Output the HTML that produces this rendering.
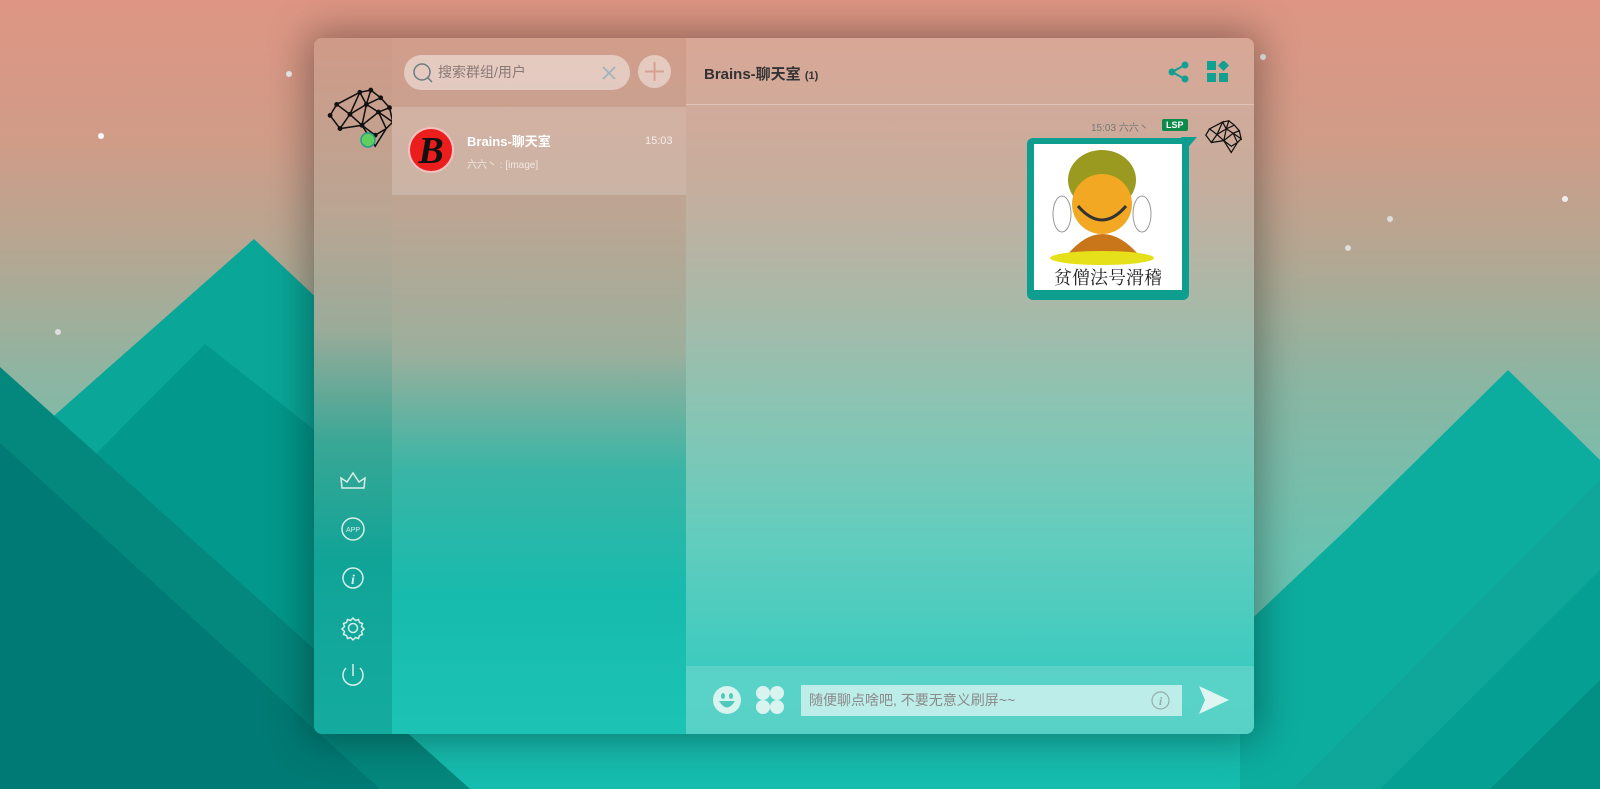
<!DOCTYPE html>
<html><head><meta charset="utf-8"><style>
*{margin:0;padding:0;box-sizing:border-box}
body{width:1600px;height:789px;overflow:hidden;position:relative;font-family:"Liberation Sans","Noto Sans CJK SC",sans-serif;background:#7dbfae}
#bg{position:absolute;left:0;top:0}
.panel{position:absolute;left:314px;top:38px;width:940px;height:696px;border-radius:8px;overflow:hidden;box-shadow:0 0 40px 6px rgba(0,0,0,.35)}
.side{position:absolute;left:0;top:0;width:78px;height:696px;background:linear-gradient(180deg,#d09a88 0%,#bba593 25%,#9aab99 42%,#3aa796 58%,#10a497 75%,#14ab9f 100%)}
.list{position:absolute;left:78px;top:0;width:294px;height:696px;background:linear-gradient(180deg,#d39d8b 0%,#bda593 25%,#9caf9c 45%,#3ab5a5 62%,#17bbad 80%,#1cc3b5 100%)}
.chat{position:absolute;left:372px;top:0;width:568px;height:696px;background:linear-gradient(180deg,#d9a796 0%,#c8ad9d 20%,#a6baa9 40%,#86c5b4 55%,#62cdbe 72%,#3ecbbf 90%,#3ac9bd 100%)}
.search{position:absolute;left:90px;top:17px;width:226px;height:35px;border-radius:18px;background:rgba(255,255,255,.45);color:#8a7a76;font-size:14px;line-height:35px;padding-left:34px}
.plus{position:absolute;left:324px;top:17px;width:33px;height:33px;border-radius:50%;background:rgba(255,255,255,.45)}
.item{position:absolute;left:78px;top:69px;width:294px;height:88px;background:rgba(255,255,255,.18)}
.hdr{position:absolute;left:0;top:0;width:568px;height:67px;border-bottom:1px solid rgba(255,255,255,.3)}
.foot{position:absolute;left:0;top:628px;width:568px;height:68px;background:rgba(255,255,255,.15)}
.inp{position:absolute;left:115px;top:19px;width:381px;height:31px;background:rgba(255,255,255,.6);color:#8a8a8a;font-size:14px;line-height:31px;padding-left:8px}
</style></head><body>
<svg id="bg" width="1600" height="789" viewBox="0 0 1600 789">
<defs><linearGradient id="sky" x1="0" y1="0" x2="0" y2="1">
<stop offset="0" stop-color="#de9583"/><stop offset=".18" stop-color="#d09c88"/><stop offset=".33" stop-color="#b2a893"/><stop offset=".5" stop-color="#88b7a4"/><stop offset=".7" stop-color="#6cc2b0"/><stop offset="1" stop-color="#5cc4b2"/></linearGradient></defs>
<rect width="1600" height="789" fill="url(#sky)"/>
<circle cx="101" cy="136" r="3" fill="#fff"/><circle cx="289" cy="74" r="3" fill="#eee"/><circle cx="58" cy="332" r="3" fill="#ddd"/>
<circle cx="1263" cy="57" r="3" fill="#eee"/><circle cx="1565" cy="199" r="3" fill="#eee"/><circle cx="1390" cy="219" r="3" fill="#ddd"/><circle cx="1348" cy="248" r="3" fill="#ddd"/>
<rect x="300" y="700" width="1000" height="89" fill="#16bcae"/>
<polygon points="0,789 0,470 55,415 254,239 340,320 340,789" fill="#0aa698"/>
<polygon points="90,460 205,344 340,450 340,789 90,789" fill="#02988b"/>
<polygon points="0,367 470,789 0,789" fill="#04877d"/>
<polygon points="0,443 380,789 0,789" fill="#007a74"/>
<polygon points="1240,789 1240,630 1347,529 1508,370 1600,460 1600,789" fill="#0cad9f"/>
<polygon points="1600,480 1293,789 1600,789" fill="#0ea799"/>
<polygon points="1600,570 1380,789 1600,789" fill="#069f93"/>
<polygon points="1600,680 1490,789 1600,789" fill="#028f84"/>
</svg>
<div class="panel">
<div class="side"></div><div class="list"></div><div class="chat"></div>
<svg style="position:absolute;left:0;top:0" width="78" height="696">
<g transform="translate(4,40) scale(1.1)" stroke="#111" stroke-width="1.4" fill="#111">
<polyline fill="none" points="17,24 11,34 20,46 29,33 17,24 38,13 29,33 44,24 38,13 48,11 44,24 57,18 48,11 57,18 65,27 55,31 44,24 40,43 29,33 40,43 20,46 40,43 55,31 68,40 65,27 55,31 62,46 52,52 40,43 52,62 62,46 68,40"/>
<circle cx="17" cy="24" r="1.5"/><circle cx="11" cy="34" r="1.5"/><circle cx="20" cy="46" r="1.5"/><circle cx="29" cy="33" r="1.5"/><circle cx="38" cy="13" r="1.5"/><circle cx="44" cy="24" r="1.5"/><circle cx="48" cy="11" r="1.5"/><circle cx="57" cy="18" r="1.5"/><circle cx="55" cy="31" r="1.5"/><circle cx="65" cy="27" r="1.5"/><circle cx="40" cy="43" r="1.5"/><circle cx="52" cy="52" r="1.5"/>
</g>
<circle cx="54" cy="102" r="7" fill="#5fcf5f" stroke="#2a9a8a" stroke-width="1.5"/>
<g fill="none" stroke="#d8efe9" stroke-width="1.5">
<path d="M28 450 L27 440 L33 444 L39 435 L45 444 L51 440 L50 450 Z"/>
<circle cx="39" cy="491" r="11"/>
<circle cx="39" cy="540" r="10"/>
<circle cx="39" cy="590" r="4.5"/><path d="M39 580 l2.5 2.5 3 -1 1 3 3 1 -1 3 2.5 2.5 -2.5 2.5 1 3 -3 1 -1 3 -3 -1 -2.5 2.5 -2.5 -2.5 -3 1 -1 -3 -3 -1 1 -3 -2.5 -2.5 2.5 -2.5 -1 -3 3 -1 1 -3 3 1 z"/>
<path d="M32 630 A10 10 0 1 0 46 630"/><path d="M39 626 V638"/>
</g>
<text x="39" y="494" font-size="7" fill="#d8efe9" text-anchor="middle" font-family="Liberation Sans">APP</text>
<text x="39" y="546" font-size="14" font-weight="bold" font-style="italic" fill="#d8efe9" text-anchor="middle" font-family="Liberation Serif">i</text>
</svg>
<div class="search">搜索群组/用户
<svg style="position:absolute;left:8px;top:7px" width="22" height="22"><circle cx="10" cy="10" r="8" fill="none" stroke="#6b7c84" stroke-width="1.5"/><path d="M16 16 L20 20" stroke="#6b7c84" stroke-width="1.5"/></svg>
<svg style="position:absolute;left:198px;top:11px" width="14" height="14"><path d="M1 1L13 13M13 1L1 13" stroke="#9fb5bd" stroke-width="1.8"/></svg></div>
<div class="plus"><svg width="33" height="33"><path d="M16.5 7V26M7 16.5H26" stroke="#d8a091" stroke-width="2"/></svg></div>
<div class="item">
<div style="position:absolute;left:16px;top:20px;width:46px;height:46px;border-radius:50%;background:#ec1d1d;overflow:hidden;border:2px solid #f5c0c0"><div style="font:italic bold 38px 'Liberation Serif',serif;color:#111;text-align:center;line-height:44px">B</div></div>
<div style="position:absolute;left:75px;top:24px;color:#fff;font-size:13px;font-weight:bold">Brains-聊天室</div>
<div style="position:absolute;left:253px;top:28px;color:#f4ece8;font-size:11px">15:03</div>
<div style="position:absolute;left:75px;top:49px;color:#f1e8e3;font-size:10px">六六丶 : [image]</div>
</div>
<div style="position:absolute;left:372px;top:0;width:568px;height:696px">
<div class="hdr"><div style="position:absolute;left:18px;top:25px;font-size:15px;font-weight:bold;color:#333">Brains-聊天室 <span style="font-size:11px">(1)</span></div>
<svg style="position:absolute;left:482px;top:23px" width="22" height="22" fill="#12a092"><circle cx="17" cy="4" r="3.5"/><circle cx="4" cy="11" r="3.5"/><circle cx="17" cy="18" r="3.5"/><path d="M4 11L17 4M4 11L17 18" stroke="#12a092" stroke-width="2"/></svg>
<svg style="position:absolute;left:521px;top:23px" width="22" height="22" fill="#12a092"><rect x="0" y="0" width="9" height="9"/><rect x="0" y="12" width="9" height="9"/><rect x="12" y="12" width="9" height="9"/><path d="M16.5 -1L22 4.5 16.5 10 11 4.5Z"/></svg>
</div>
<div style="position:absolute;left:405px;top:81px;font-size:10px;color:#777">15:03 六六丶</div>
<div style="position:absolute;left:476px;top:81px;background:#0e8a4a;color:#fff;font-size:9px;font-weight:bold;padding:1px 4px;border-radius:2px">LSP</div>
<svg style="position:absolute;left:513px;top:76px" width="46" height="42"><g transform="scale(.62)" stroke="#111" stroke-width="2" fill="none"><polyline points="17,24 11,34 20,46 29,33 17,24 38,13 29,33 44,24 38,13 48,11 44,24 57,18 48,11 57,18 65,27 55,31 44,24 40,43 29,33 40,43 20,46 40,43 55,31 68,40 65,27 55,31 62,46 52,52 40,43 52,62 62,46 68,40"/></g></svg>
<div style="position:absolute;left:341px;top:100px;width:162px;height:162px;background:#0d9e8f;border-radius:6px"></div>
<svg style="position:absolute;left:495px;top:99px" width="16" height="16"><path d="M0 0H16L4 14Z" fill="#0d9e8f"/></svg>
<div style="position:absolute;left:348px;top:106px;width:148px;height:146px;background:#fff;overflow:hidden">
<svg width="148" height="146"><ellipse cx="28" cy="70" rx="9" ry="18" fill="#fff" stroke="#999"/><ellipse cx="108" cy="70" rx="9" ry="18" fill="#fff" stroke="#999"/>
<ellipse cx="68" cy="36" rx="34" ry="30" fill="#9a9a20"/><circle cx="68" cy="60" r="30" fill="#f3a823"/><path d="M44 62 Q68 90 92 62" stroke="#333" stroke-width="3" fill="none"/>
<path d="M34 110 Q68 70 104 110 Z" fill="#c9761a"/><ellipse cx="68" cy="114" rx="52" ry="7" fill="#e5e01a"/>
<text x="74" y="140" font-size="18" text-anchor="middle" fill="#222" font-family="Noto Serif CJK SC,serif">贫僧法号滑稽</text></svg></div>
<div class="foot">
<svg style="position:absolute;left:27px;top:20px" width="28" height="28"><circle cx="14" cy="14" r="14" fill="#d9f3ef"/><ellipse cx="10" cy="10" rx="2" ry="3" fill="#4fc9bb"/><ellipse cx="18" cy="10" rx="2" ry="3" fill="#4fc9bb"/><path d="M6 15 Q14 28 22 15 Z" fill="#4fc9bb"/></svg>
<svg style="position:absolute;left:70px;top:20px" width="28" height="28" fill="#d9f3ef"><circle cx="7" cy="7" r="7"/><circle cx="21" cy="7" r="7"/><circle cx="7" cy="21" r="7"/><circle cx="21" cy="21" r="7"/></svg>
<div class="inp">随便聊点啥吧, 不要无意义刷屏~~
<svg style="position:absolute;left:350px;top:6px" width="19" height="19"><circle cx="9.5" cy="9.5" r="8.5" fill="none" stroke="#9aa" stroke-width="1.2"/><text x="9.5" y="14" font-size="12" font-style="italic" font-weight="bold" fill="#9aa" text-anchor="middle" font-family="Liberation Serif">i</text></svg></div>
<svg style="position:absolute;left:513px;top:20px" width="30" height="28"><path d="M0 0L30 14 0 28 6 14Z" fill="#def5f1"/></svg>
</div>
</div>
</div>
</body></html>
